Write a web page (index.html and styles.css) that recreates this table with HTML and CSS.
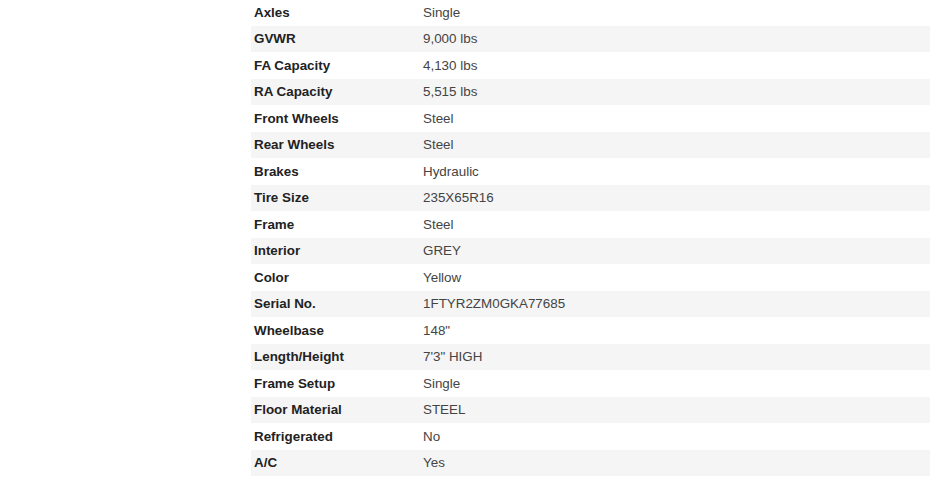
FILE: index.html
```html
<!DOCTYPE html>
<html lang="en">
<head>
    <meta charset="UTF-8">
    <title>Specifications</title>
    <link rel="stylesheet" href="styles.css">
</head>
<body>

<div class="specs">
    <table class="spec-table">
        <tbody>
            <tr><th>Axles</th><td>Single</td></tr>
            <tr><th>GVWR</th><td>9,000 lbs</td></tr>
            <tr><th>FA Capacity</th><td>4,130 lbs</td></tr>
            <tr><th>RA Capacity</th><td>5,515 lbs</td></tr>
            <tr><th>Front Wheels</th><td>Steel</td></tr>
            <tr><th>Rear Wheels</th><td>Steel</td></tr>
            <tr><th>Brakes</th><td>Hydraulic</td></tr>
            <tr><th>Tire Size</th><td>235X65R16</td></tr>
            <tr><th>Frame</th><td>Steel</td></tr>
            <tr><th>Interior</th><td>GREY</td></tr>
            <tr><th>Color</th><td>Yellow</td></tr>
            <tr><th>Serial No.</th><td>1FTYR2ZM0GKA77685</td></tr>
            <tr><th>Wheelbase</th><td>148"</td></tr>
            <tr><th>Length/Height</th><td>7'3" HIGH</td></tr>
            <tr><th>Frame Setup</th><td>Single</td></tr>
            <tr><th>Floor Material</th><td>STEEL</td></tr>
            <tr><th>Refrigerated</th><td>No</td></tr>
            <tr><th>A/C</th><td>Yes</td></tr>
        </tbody>
    </table>
</div>

</body>
</html>
```

FILE: styles.css
```css
body {
    font-family: 'Liberation Sans', Arial, sans-serif;
    font-size: 13.4px;
    color: #444;
    margin: 0;
    padding: 0;
    background-color: #fff;
}

.specs {
    width: 679px;
    margin: -1px 0 0 251px;
}

.spec-table {
    width: 100%;
    border-collapse: collapse;
}

.spec-table th,
.spec-table td {
    padding: 3.5px 3px 3px;
    line-height: 20px;
    text-align: left;
    vertical-align: middle;
}

.spec-table th {
    width: 163px;
    font-weight: bold;
    color: #222;
}

.spec-table tr:nth-child(even) {
    background-color: #f5f5f5;
}
```
